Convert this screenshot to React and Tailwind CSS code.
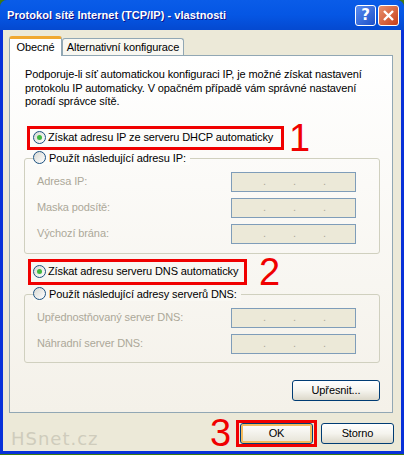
const bodyFont = "font-['Liberation_Sans',Arial,sans-serif] text-[11px] tracking-[-0.11px]";

function Radio({ checked }) {
  return (
    <span className="flex h-[13px] w-[13px] shrink-0 items-center justify-center rounded-full border border-[#1c5180] bg-linear-to-br from-[#d8d8d2] to-white">
      {checked && <span className="h-[5px] w-[5px] rounded-full bg-[#3fb83f]" />}
    </span>
  );
}

function IpField({ label }) {
  return (
    <div className="flex h-5 items-center justify-between">
      <span className="text-[#aca899]">{label}</span>
      <div className="flex h-5 w-[125px] gap-[27px] border border-[#7f9db9] bg-[#ece9d8] pl-[31px] text-[#aca899]">
        <span>.</span>
        <span>.</span>
        <span>.</span>
      </div>
    </div>
  );
}

function Group({ legend, legendClass, fields, className }) {
  return (
    <div className={`relative flex flex-col gap-[6px] rounded-[3px] border border-[#d0d0bf] pb-2 pl-3 pr-[23px] pt-[13px] ${className}`}>
      <div className={`absolute -top-[8px] left-2 flex items-center gap-[3px] pr-1 ${legendClass}`}>
        <Radio />
        <span className="leading-[14px] text-black">{legend}</span>
      </div>
      {fields.map((f) => (
        <IpField key={f} label={f} />
      ))}
    </div>
  );
}

function Marked({ className, children }) {
  return <div className={`flex items-center border-[3px] border-[#f00000] ${className}`}>{children}</div>;
}

function XpButton({ children, className }) {
  return (
    <button className={`flex h-[21px] items-center justify-center rounded-[3px] border border-[#003c74] bg-linear-to-b from-white via-[#f5f4ee] to-[#dcd8ca] text-black ${className}`}>
      {children}
    </button>
  );
}

export default function App() {
  return (
    <div className={`flex h-[455px] w-[404px] flex-col overflow-hidden bg-[#3f7a12] ${bodyFont}`}>
      <div className="flex h-[454px] flex-col rounded-t-[7px] bg-[#0831d9]">
        {/* title bar */}
        <div className="flex h-[30px] shrink-0 items-center justify-between rounded-t-[7px] bg-linear-to-b from-[#0a5ce8] via-[#0556e4] to-[#0449d0] pl-[7px] pr-[5px]">
          <span className="text-[11px] font-bold tracking-[0.05px] text-white [text-shadow:1px_1px_0_#0f1089]">
            Protokol sítě Internet (TCP/IP) - vlastnosti
          </span>
          <div className="flex gap-[2px]">
            <div className="flex h-[21px] w-[21px] items-center justify-center rounded-[3px] border border-white bg-linear-to-br from-[#5a8cf0] to-[#1c4fc8] font-['DejaVu_Sans',sans-serif] text-[15px] font-bold text-white">
              ?
            </div>
            <div className="flex h-[21px] w-[21px] items-center justify-center rounded-[3px] border border-white bg-linear-to-br from-[#e8906c] to-[#c63c14]">
              <svg width="13" height="13" viewBox="0 0 13 13">
                <path d="M2 2 L11 11 M11 2 L2 11" stroke="white" strokeWidth="2.4" />
              </svg>
            </div>
          </div>
        </div>

        {/* dialog body */}
        <div className="mx-[3px] mb-[3px] flex grow flex-col bg-[#ece9d8] pl-[6px] pr-[8px] pt-[5px]">
          {/* tabs */}
          <div className="relative z-10 flex h-[20px] items-end">
            <div className="-mb-px flex h-[20px] w-[53px] items-center justify-center rounded-t-[3px] border-x border-[#91a7b4] border-t-[3px] border-t-[#f0a830] bg-white">
              Obecné
            </div>
            <div className="flex h-[17px] w-[122px] items-center justify-center rounded-t-[3px] border-x border-t border-[#91a7b4] bg-[#f8f7f1]">
              Alternativní konfigurace
            </div>
          </div>

          {/* tab panel */}
          <div className="flex h-[358px] flex-col border border-[#91a7b4] bg-linear-to-b from-white to-[#f4f1e9] pl-[14px] pr-3 pt-[12px]">
            <p className="ml-px leading-[13.5px] text-black">
              Podporuje-li síť automatickou konfiguraci IP, je možné získat nastavení
              <br />
              protokolu IP automaticky. V opačném případě vám správné nastavení
              <br />
              poradí správce sítě.
            </p>

            <div className="mt-[17px] flex items-center">
              <Marked className="ml-[3px] h-6 w-[257px] gap-[2px] pl-[3px]">
                <Radio checked />
                <span>Získat adresu IP ze serveru DHCP automaticky</span>
              </Marked>
              <span className="ml-[5px] text-[38px] leading-6 text-[#f00000]">1</span>
            </div>

            <Group
              className="mt-2 h-[96px]"
              legendClass="bg-[#fdfdfb]"
              legend="Použít následující adresu IP:"
              fields={["Adresa IP:", "Maska podsítě:", "Výchozí brána:"]}
            />

            <div className="mt-[5px] flex items-center">
              <Marked className="ml-1 h-[26px] w-[219px] gap-[2px] pl-[2px]">
                <Radio checked />
                <span>Získat adresu serveru DNS automaticky</span>
              </Marked>
              <span className="ml-3 text-[38px] leading-6 text-[#f00000]">2</span>
            </div>

            <Group
              className="mt-[9px] h-[69px]"
              legendClass="bg-[#f9f8f3]"
              legend="Použít následující adresy serverů DNS:"
              fields={["Upřednostňovaný server DNS:", "Náhradní server DNS:"]}
            />

            <XpButton className="mt-[17px] w-[88px] self-end">Upřesnit...</XpButton>
          </div>

          {/* footer */}
          <div className="mt-[7px] flex items-start">
            <span className="ml-[2px] mt-[8px] font-['DejaVu_Sans',sans-serif] text-[18px] leading-[22px] tracking-[1px] text-[#cfccbc]">
              HSnet.cz
            </span>
            <span className="ml-auto text-[38px] leading-[27px] text-[#f00000]">3</span>
            <Marked className="ml-[5px] h-[27px] w-[81px] justify-center">
              <button className="flex h-[21px] w-[73px] items-center justify-center rounded-[3px] border border-[#003c74] bg-linear-to-b from-white to-[#e6e3d6] shadow-[inset_0_0_0_2px_#f5bb5c]">
                OK
              </button>
            </Marked>
            <XpButton className="ml-1 mr-[-1px] mt-[3px] w-[73px]">Storno</XpButton>
          </div>
        </div>
      </div>
    </div>
  );
}
